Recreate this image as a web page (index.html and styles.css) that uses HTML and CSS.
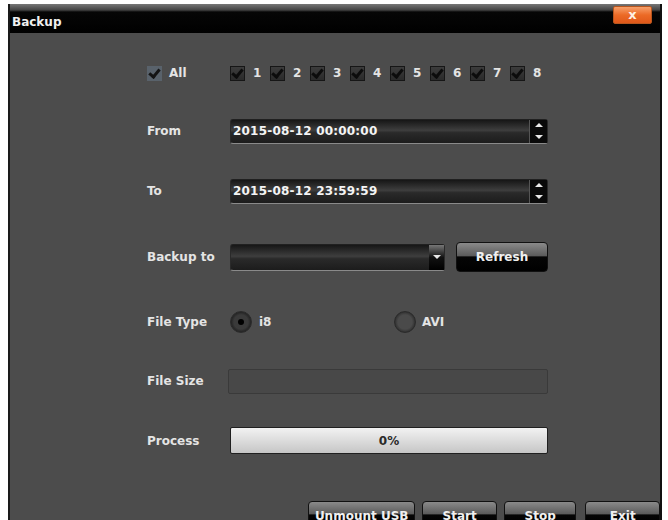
FILE: index.html
```html
<!DOCTYPE html>
<html lang="en">
  <head>
    <meta charset="UTF-8" />
    <title>Backup</title>
    <link rel="stylesheet" href="styles.css">
  </head>
  <body>
    <div class="window">
      <div class="titlebar">
        <span class="title">Backup</span>
        <button class="close">x</button>
      </div>
      <div class="content">
        <div class="row row-channels">
          <label class="all"><span class="check check-all"></span>All</label>
          <div class="channels">
            <label class="ch"><span class="check"></span>1</label>
            <label class="ch"><span class="check"></span>2</label>
            <label class="ch"><span class="check"></span>3</label>
            <label class="ch"><span class="check"></span>4</label>
            <label class="ch"><span class="check"></span>5</label>
            <label class="ch"><span class="check"></span>6</label>
            <label class="ch"><span class="check"></span>7</label>
            <label class="ch"><span class="check"></span>8</label>
          </div>
        </div>

        <div class="row row-from">
          <span class="label">From</span>
          <div class="field">
            <span class="value">2015-08-12 00:00:00</span>
            <span class="spin"><i class="up"></i><i class="down"></i></span>
          </div>
        </div>

        <div class="row row-to">
          <span class="label">To</span>
          <div class="field">
            <span class="value">2015-08-12 23:59:59</span>
            <span class="spin"><i class="up"></i><i class="down"></i></span>
          </div>
        </div>

        <div class="row row-dest">
          <span class="label">Backup to</span>
          <div class="field select">
            <span class="value"></span>
            <span class="drop"><i class="down"></i></span>
          </div>
          <button class="btn refresh">Refresh</button>
        </div>

        <div class="row row-type">
          <span class="label">File Type</span>
          <div class="radios">
            <label class="radio-item"><span class="radio on"></span>i8</label>
            <label class="radio-item avi"><span class="radio"></span>AVI</label>
          </div>
        </div>

        <div class="row row-size">
          <span class="label">File Size</span>
          <div class="box"></div>
        </div>

        <div class="row row-process">
          <span class="label">Process</span>
          <div class="progress">0%</div>
        </div>

        <div class="actions">
          <button class="btn unmount">Unmount USB</button>
          <button class="btn start">Start</button>
          <button class="btn stop">Stop</button>
          <button class="btn exit">Exit</button>
        </div>
      </div>
    </div>
  </body>
</html>
```

FILE: styles.css
```css
body {
  margin: 0;
  background-color: #fff;
  font-family: "DejaVu Sans", Verdana, sans-serif;
  font-weight: bold;
  overflow: hidden;
}

.window {
  margin: 4px 0 0 8px;
  width: 650px;
  height: 540px;
  background-color: #4c4c4c;
  border-left: 2px solid #1a1a1a;
  border-right: 2px solid #111;
}

.titlebar {
  height: 29px;
  background: linear-gradient(#777 0, #444 6px, #060606 8px, #000 100%);
  display: flex;
  align-items: center;
  justify-content: space-between;
  padding: 0 8px 0 2px;
}

.title {
  color: #f0f0f0;
  font-size: 12px;
  padding-top: 7px;
}

.close {
  align-self: flex-start;
  margin-top: 2px;
  width: 39px;
  height: 18px;
  border: 1px solid #b8561e;
  border-radius: 2px;
  background: linear-gradient(#f7a06a, #ec6a26 50%, #e0581a);
  color: #fff0e4;
  font-family: "DejaVu Sans", Verdana, sans-serif;
  font-weight: bold;
  font-size: 13px;
  line-height: 14px;
  padding: 0;
}

.content {
  padding-left: 137px;
  color: #e4e4e4;
  font-size: 12px;
}

.row {
  display: flex;
  align-items: center;
  height: 26px;
}

.label {
  width: 83px;
  flex: none;
}

.row-channels { margin-top: 27px; }
.row-from { margin-top: 32px; }
.row-to { margin-top: 34px; }
.row-dest { margin-top: 40px; }
.row-type { margin-top: 39px; }
.row-size { margin-top: 33px; }
.row-process { margin-top: 33px; height: 27px; }

/* checkboxes */
.all {
  display: flex;
  align-items: center;
  width: 83px;
}

.channels {
  display: flex;
}

.ch {
  display: flex;
  align-items: center;
  width: 40px;
}

.check {
  position: relative;
  width: 13px;
  height: 13px;
  border: 1px solid #161616;
  background: linear-gradient(#3c3c3c, #2a2a2a);
  margin-right: 8px;
}

.check::after {
  content: "";
  position: absolute;
  left: 3px;
  top: 0;
  width: 4px;
  height: 8px;
  border: solid #0c0c0c;
  border-width: 0 3px 3px 0;
  transform: rotate(40deg);
}

.check-all {
  border-color: #59626b;
  background: #59626b;
  margin-right: 7px;
}

.check-all::after {
  border-color: #141414;
}

/* inputs */
.field {
  position: relative;
  width: 318px;
  height: 25px;
  box-sizing: border-box;
  border: 1px solid #2a2a2a;
  border-top-color: #202020;
  border-bottom-color: #8a8a8a;
  border-radius: 3px;
  background: linear-gradient(#161616, #3e3e3e 45%, #2a2a2a 55%, #1c1c1c);
  display: flex;
  align-items: center;
}

.value {
  flex: 1;
  padding-left: 2px;
  color: #f4f4f4;
  font-size: 12px;
  letter-spacing: 0.2px;
}

.spin {
  width: 17px;
  height: 23px;
  background: #0a0a0a;
  display: flex;
  flex-direction: column;
  align-items: center;
  justify-content: space-around;
  border-left: 1px solid #555;
}

.spin .up {
  border: 4px solid transparent;
  border-bottom: 4px solid #e8e8e8;
  border-top: 0;
}

.spin .down,
.drop .down {
  border: 4px solid transparent;
  border-top: 4px solid #e8e8e8;
  border-bottom: 0;
}

.select {
  width: 215px;
  height: 27px;
}

.drop {
  width: 15px;
  height: 25px;
  background: linear-gradient(#777, #111 50%, #000);
  display: flex;
  align-items: center;
  justify-content: center;
}

.btn {
  height: 27px;
  border: 1px solid #111;
  border-radius: 4px;
  background: linear-gradient(#8a8a8a, #5c5c5c 45%, #050505 50%, #000);
  color: #f0f0f0;
  font-family: "DejaVu Sans", Verdana, sans-serif;
  font-weight: bold;
  font-size: 12px;
  padding: 0;
}

.refresh {
  width: 92px;
  margin-left: 11px;
  height: 30px;
}

/* radios */
.radios {
  display: flex;
  align-items: center;
}

.radio-item {
  display: flex;
  align-items: center;
  width: 164px;
}

.radio {
  width: 20px;
  height: 20px;
  border-radius: 50%;
  border: 1px solid #2a2a2a;
  background: radial-gradient(circle, #3a3a3a 50%, #262626 68%, #5a5a5a);
  margin-right: 7px;
  display: flex;
  align-items: center;
  justify-content: center;
}

.radio.on::after {
  content: "";
  width: 6px;
  height: 6px;
  border-radius: 50%;
  background: #000;
}

.avi .radio {
  background: radial-gradient(circle, #4a4a4a 50%, #333 70%, #555);
  margin-right: 6px;
}

/* file size & progress */
.box {
  width: 320px;
  margin-left: -2px;
  height: 25px;
  box-sizing: border-box;
  border: 1px solid #3a3a3a;
  border-radius: 2px;
  background: #484848;
}

.progress {
  width: 318px;
  height: 27px;
  box-sizing: border-box;
  border: 1px solid #202020;
  border-radius: 2px;
  background: linear-gradient(#f2f2f2, #dcdcdc 50%, #c6c6c6);
  color: #2a2a2a;
  font-size: 12px;
  display: flex;
  align-items: center;
  justify-content: center;
}

.actions {
  display: flex;
  margin-top: 47px;
  margin-left: 161px;
  gap: 7px;
}

.btn.unmount,
.btn.start,
.btn.stop,
.btn.exit {
  padding-top: 1px;
  height: 28px;
}

.unmount { width: 108px; }
.start { width: 75px; }
.stop { width: 73px; }
.exit { width: 75px; margin-left: 2px; }
```
